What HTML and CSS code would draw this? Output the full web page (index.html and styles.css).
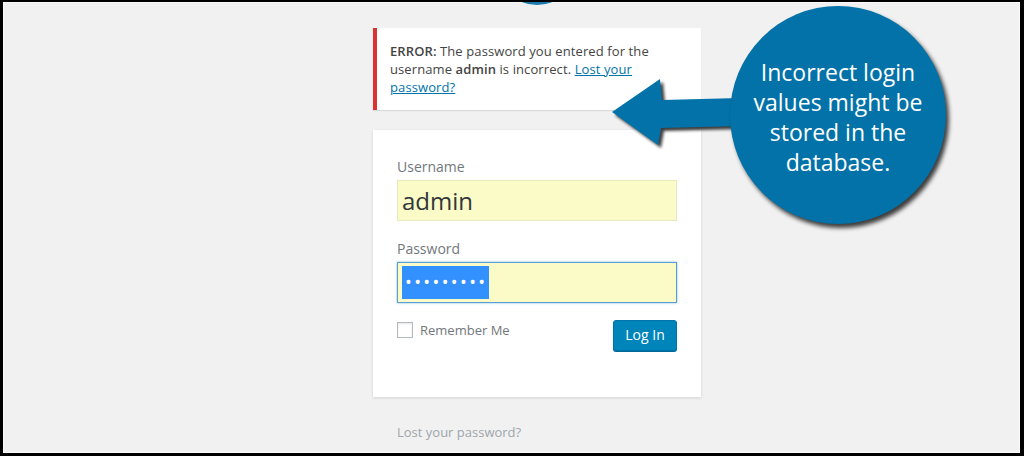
FILE: index.html
```html
<!DOCTYPE html>
<html lang="en">

<head>
    <meta charset="UTF-8">
    <meta name="viewport" content="width=device-width, initial-scale=1.0">
    <title>Log In</title>
    <link rel="stylesheet" href="styles.css">
</head>

<body>
    <div class="frame">
        <div class="wp-logo"></div>

        <div class="login">
            <div class="login-error">
                <strong>ERROR:</strong> The password you entered for the username <strong>admin</strong> is incorrect.
                <a href="#">Lost your password?</a>
            </div>

            <form class="login-form">
                <label class="field-label">Username</label>
                <div class="field">admin</div>

                <label class="field-label">Password</label>
                <div class="field field-focus"><span class="selected">&bull;&bull;&bull;&bull;&bull;&bull;&bull;&bull;&bull;</span></div>

                <div class="form-footer">
                    <label class="remember"><span class="checkbox"></span>Remember Me</label>
                    <button type="button" class="btn-login">Log In</button>
                </div>
            </form>

            <p class="nav-link"><a href="#">Lost your password?</a></p>
        </div>

        <!-- annotation overlay -->
        <svg class="callout-arrow" width="140" height="90" viewBox="0 0 140 90">
            <polygon points="4,38 52,5 54,26 132,24 132,52 53,54 50,71" fill="#0272a8" />
        </svg>
        <div class="callout">
            <p>Incorrect login values might be stored in the database.</p>
        </div>
    </div>
</body>

</html>
```

FILE: styles.css
```css
* {
    box-sizing: border-box;
}

body {
    margin: 0;
    font-family: "Open Sans", "Noto Sans", sans-serif;
    background-color: #000;
}

.frame {
    position: relative;
    width: 1024px;
    height: 456px;
    overflow: hidden;
    background-color: #f1f1f1;
    border-style: solid;
    border-color: #000;
    border-width: 2px 4px 3px 3px;
    box-shadow: inset 1px 1px 0 #fafafa, inset -1px -1px 0 #fafafa;
}

.wp-logo {
    position: absolute;
    left: 492px;
    top: -81px;
    width: 84px;
    height: 84px;
    border-radius: 50%;
    background-color: #1a78ad;
}

.login {
    width: 328px;
    margin-left: 370px;
    padding-top: 26px;
}

.login-error {
    background-color: #fff;
    border-left: 4px solid #dc3232;
    padding: 14px 12px 14px 13px;
    font-size: 13px;
    line-height: 18px;
    letter-spacing: 0.1px;
    color: #444;
    box-shadow: 0 1px 1px rgba(0, 0, 0, 0.1);
}

.login-error strong {
    font-weight: 600;
}

.login-error a {
    color: #0073aa;
}

.login-form {
    margin: 20px 0 0;
    padding: 26px 24px 46px;
    background-color: #fff;
    box-shadow: 0 1px 3px rgba(0, 0, 0, 0.13);
}

.field-label {
    display: block;
    font-size: 14px;
    line-height: 21px;
    color: #72777c;
    margin-bottom: 3px;
}

.field {
    height: 41px;
    margin-bottom: 17px;
    padding: 3px 4px;
    background-color: #fafbc6;
    border: 1px solid #e6e8c0;
    font-size: 24px;
    line-height: 33px;
    color: #32373c;
}

.field-focus {
    border-color: #5b9dd9;
    box-shadow: 0 0 2px rgba(30, 140, 190, 0.6);
}

.selected {
    display: inline-block;
    height: 33px;
    padding: 0 1px 0 3px;
    background-color: #3390ff;
    color: #fff;
    font-size: 18px;
    letter-spacing: 2.4px;
    vertical-align: top;
}

.form-footer {
    display: flex;
    justify-content: space-between;
    align-items: flex-start;
}

.remember {
    display: flex;
    align-items: center;
    gap: 7px;
    margin-top: 1px;
    font-size: 13px;
    color: #72777c;
}

.checkbox {
    width: 16px;
    height: 16px;
    border: 1px solid #b4b9be;
    background-color: #fff;
    box-shadow: inset 0 1px 2px rgba(0, 0, 0, 0.1);
}

.btn-login {
    height: 31px;
    width: 64px;
    padding: 0 8px 2px;
    background-color: #0085ba;
    border: 1px solid #0073aa;
    border-radius: 3px;
    box-shadow: 0 1px 0 #006799;
    color: #fff;
    font-family: inherit;
    font-size: 14px;
}

.nav-link {
    margin: 26px 0 0;
    padding-left: 24px;
    font-size: 13px;
}

.nav-link a {
    color: #a0a5aa;
    text-decoration: none;
}

.callout-arrow {
    position: absolute;
    left: 605px;
    top: 72px;
    filter: drop-shadow(3px 3px 1.5px rgba(0, 0, 0, 0.75));
}

.callout {
    position: absolute;
    left: 727px;
    top: 4px;
    width: 216px;
    height: 218px;
    border-radius: 50%;
    background-color: #0272a8;
    box-shadow: 3px 4px 4px rgba(0, 0, 0, 0.75);
    display: flex;
    align-items: center;
    justify-content: center;
    padding: 4px 22px 0;
}

.callout p {
    margin: 0;
    color: #fff;
    font-family: "Open Sans", sans-serif;
    font-size: 23px;
    line-height: 30px;
    text-align: center;
}
```
